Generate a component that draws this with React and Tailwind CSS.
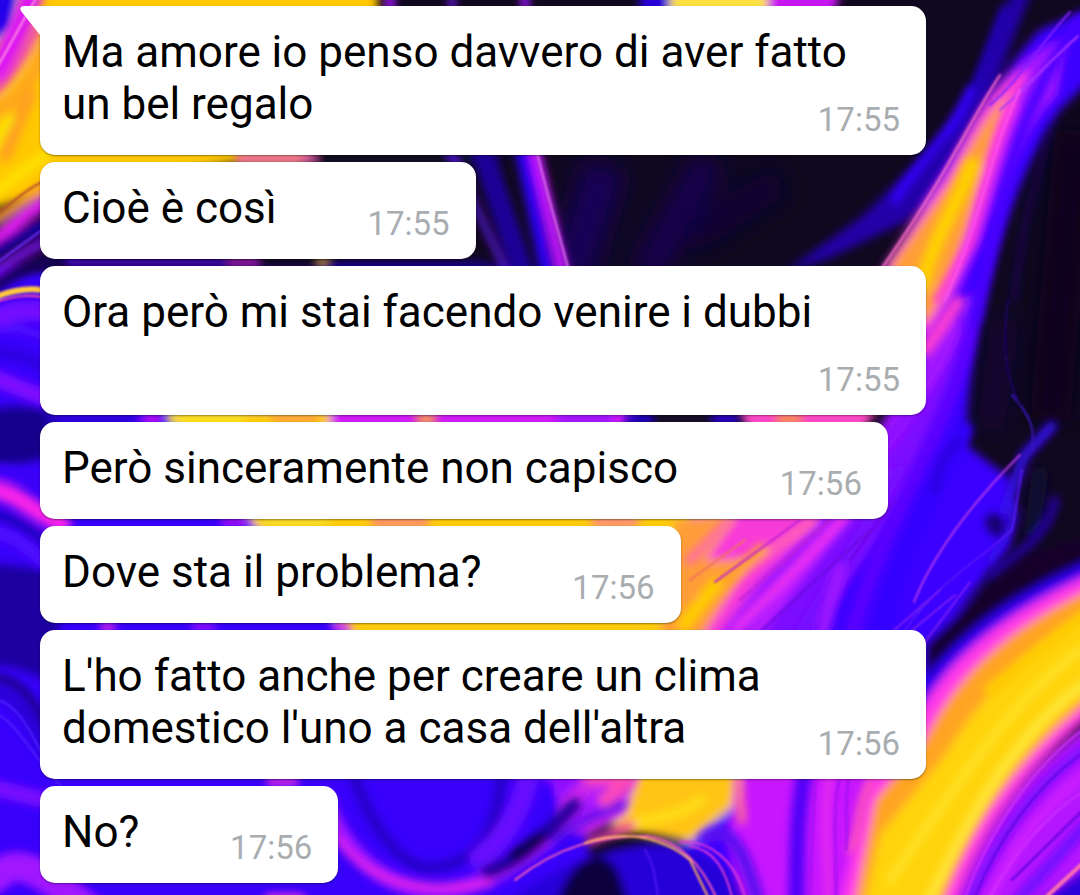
const messages = [
  { text: "Ma amore io penso davvero di aver fatto un bel regalo", time: "17:55" },
  { text: "Cioè è così", time: "17:55" },
  { text: "Ora però mi stai facendo venire i dubbi", time: "17:55" },
  { text: "Però sinceramente non capisco\u00a0", time: "17:56" },
  { text: "Dove sta il problema?", time: "17:56" },
  { text: "L'ho fatto anche per creare un clima domestico l'uno a casa dell'altra", time: "17:56" },
  { text: "No?", time: "17:56" },
];

// large soft areas of paint
const areas = [
  { d: "M-30 270H320L420 420L560 640L600 925H-30Z", fill: "#3800fa" },
  { d: "M-30 -30H378V60L300 162H240L60 190L-30 215Z", fill: "#ffc800" },
  { d: "M640 -30H672V30H640Z", fill: "#2c00d8" },
  { d: "M670 -30H770V30H670Z", fill: "#fbe040" },
  { d: "M770 -30H846L830 30H766Z", fill: "#c818f0" },
  { d: "M-30 -30H24L14 30L-30 62Z", fill: "#2400e8" },
  { d: "M-30 415C0 405 30 400 60 415V455C30 465 0 470 -30 465Z", fill: "#19008c" },
  { d: "M-30 560L60 570V690C30 670 0 660 -30 670Z", fill: "#1a00a0" },
  { d: "M320 262H480L560 280H320Z", fill: "#1c0098" },
  { d: "M1022 -30C985 50 975 110 925 155L860 218L780 275L830 258L905 222C950 180 975 140 1005 60L1040 -30Z", fill: "#2200a8" },
  // right ribbon and the purple field that it runs into
  { d: "M1110 0L1040 30C1000 70 940 180 880 275L926 400L640 640L700 925H900L930 650L975 590L1010 545L1012 480L966 445C968 340 1000 200 1060 110L1110 60Z", fill: "#3a00ff" },
  { d: "M926 320L978 290C962 380 925 460 870 550L800 650H660L690 520L880 430Z", fill: "#7c08ff" },
  { d: "M926 330L960 310C930 400 880 470 790 580L740 650H660L690 520L880 430Z", fill: "#a012ff" },
  { d: "M165 408H420L560 425L590 510L730 510L700 560L680 640H355L250 520Z", fill: "#ffcc10" },
  { d: "M330 405H640L600 460H330Z", fill: "#d01cf8" },
  { d: "M655 405H712V430H655Z", fill: "#140a28" },
  { d: "M735 405H880L850 450H760Z", fill: "#ff48c8" },
  { d: "M690 515H825L760 580L715 640H660Z", fill: "#f83ad8" },
  { d: "M675 520L735 515L705 560L750 560L700 640H660Z", fill: "#ff9d38" },
  { d: "M640 765H738L735 805L690 842L640 832L610 832Z", fill: "#ffc414" },
  { d: "M560 765H640L625 815L590 835L560 825Z", fill: "#c828ec" },
  { d: "M740 765H880L850 925H750L728 835Z", fill: "#c814ff" },
  { d: "M480 925C540 870 620 835 680 845C730 860 750 890 750 925Z", fill: "#2600d8" },
  { d: "M550 925C565 870 580 856 600 856C625 862 618 890 640 925Z", fill: "#10003c" },
  // river at the bottom right
  { d: "M1110 530L1020 555L925 645V700L1110 600Z", fill: "#12002c" },
  { d: "M1110 552C1010 592 960 632 915 690L925 720L1110 610Z", fill: "#2c00f0" },
  { d: "M1110 565C1010 608 950 652 915 720L870 775L835 925H950C975 840 1020 770 1110 700Z", fill: "#ff38e8" },
  { d: "M1110 580C1020 620 960 666 925 740L875 800L850 925H935C965 835 1010 760 1110 685Z", fill: "#ffa424" },
  { d: "M1110 600C1030 645 990 685 945 755L880 835L860 925H925C960 830 1010 750 1110 675Z", fill: "#ffd40a" },
  { d: "M1110 712C1030 760 980 830 950 925H1110Z", fill: "#b412ff" },
  { d: "M1110 850L1040 900V925H1110Z", fill: "#2a00d8" },
  // tongue at the top right
  { d: "M1065 40C1000 60 970 130 945 175L875 280L926 350C980 270 1000 150 1055 95Z", fill: "#a414ff" },
  { d: "M1030 70C996 76 975 125 950 170L884 268L926 335C970 270 985 160 1030 70Z", fill: "#ff40d8" },
  { d: "M1010 92C988 110 968 150 948 185L890 266L926 324C968 260 980 170 1010 92Z", fill: "#ff9e38" },
];

// very faint folds in the dark part
const folds = [
  { d: "M605 165L570 280", stroke: "#150658", width: 44 },
  { d: "M710 160L645 275", stroke: "#140550", width: 34 },
  { d: "M690 240L780 180", stroke: "#100434", width: 30 },
  { d: "M1075 130L1050 420", stroke: "#0e061c", width: 40 },
  { d: "M1005 320L990 430", stroke: "#120644", width: 14 },
];

const streaks = [
  // left edge
  { d: "M32 -5C24 20 10 48 -5 72", stroke: "#dc18f4", width: 22 },
  { d: "M38 28C22 62 8 80 -5 92", stroke: "#f040c0", width: 8 },
  { d: "M44 50C30 88 10 105 -5 112", stroke: "#ffa81c", width: 16 },
  { d: "M30 95L5 155", stroke: "#ffa020", width: 13 },
  { d: "M-5 145L10 118", stroke: "#f8e400", width: 9 },
  { d: "M45 155L-5 192", stroke: "#ffe000", width: 11 },
  { d: "M45 186L-5 220", stroke: "#ffa020", width: 9 },
  { d: "M45 202C20 217 10 228 -5 240", stroke: "#e41cf4", width: 13 },
  { d: "M50 222C26 232 8 244 -5 252", stroke: "#18009c", width: 14 },
  { d: "M60 237C35 244 12 260 -5 272", stroke: "#8410ff", width: 8 },
  { d: "M70 258C35 260 12 274 -5 286", stroke: "#14005c", width: 13 },
  { d: "M45 312C25 308 10 312 -5 318", stroke: "#7410ff", width: 20 },
  { d: "M45 338C25 328 12 328 -5 330", stroke: "#5208ff", width: 8 },
  { d: "M45 368C25 355 12 352 -5 354", stroke: "#2c00d8", width: 8 },
  { d: "M45 398L-5 378", stroke: "#8210ff", width: 16 },
  { d: "M-5 470L45 480", stroke: "#3a00f8", width: 14 },
  { d: "M-5 490C20 494 32 512 62 524", stroke: "#f820e8", width: 18 },
  { d: "M-5 515C15 518 28 528 45 542", stroke: "#1c00b8", width: 9 },
  { d: "M-5 532C15 536 28 548 45 562", stroke: "#5008ff", width: 14 },
  { d: "M-5 692C15 690 32 722 45 750", stroke: "#2c00d8", width: 14 },
  { d: "M-5 678C18 678 34 700 45 725", stroke: "#12006c", width: 7 },
  { d: "M-5 788L45 800", stroke: "#7a10ff", width: 16 },
  { d: "M-5 878C20 850 50 880 90 910", stroke: "#a012ff", width: 30 },
  { d: "M270 900H300", stroke: "#f030e8", width: 12 },
  // stripes showing between the bubbles
  { d: "M240 158H312", stroke: "#f868b8", width: 10 },
  { d: "M322 159H500", stroke: "#100820", width: 9 },
  { d: "M70 262H225", stroke: "#5a08ff", width: 6 },
  { d: "M230 262H258", stroke: "#e020f8", width: 6 },
  { d: "M318 262H328", stroke: "#f8c030", width: 6 },
  { d: "M50 419H132", stroke: "#2c00d0", width: 9 },
  { d: "M146 419H158", stroke: "#d818f0", width: 9 },
  { d: "M172 419H240", stroke: "#f8e420", width: 9 },
  { d: "M275 419H315", stroke: "#ff9c40", width: 9 },
  { d: "M420 419H432", stroke: "#ffb828", width: 9 },
  { d: "M560 419H610", stroke: "#9010ff", width: 9 },
  { d: "M628 419H650", stroke: "#2800f0", width: 9 },
  { d: "M715 419H735", stroke: "#3000f8", width: 9 },
  { d: "M780 419H798", stroke: "#ff9c38", width: 9 },
  { d: "M225 522H245", stroke: "#c018f0", width: 8 },
  { d: "M265 522H325", stroke: "#f4e030", width: 8 },
  { d: "M375 522H425", stroke: "#ff7890", width: 8 },
  { d: "M595 522H635", stroke: "#ff78a0", width: 8 },
  { d: "M104 627H112", stroke: "#f030e8", width: 8 },
  { d: "M195 627H212", stroke: "#a014ff", width: 8 },
  { d: "M335 627H346", stroke: "#e020f0", width: 8 },
  { d: "M270 782H295", stroke: "#f030e0", width: 8 },
  { d: "M390 -4V12", stroke: "#a018f8", width: 9 },
  { d: "M452 -4V12", stroke: "#7014f0", width: 6 },
  { d: "M525 -4V12", stroke: "#9818f8", width: 8 },
  // dark field in the middle
  { d: "M482 150L525 280", stroke: "#1a0098", width: 22 },
  { d: "M440 130L512 285", stroke: "#6014ff", width: 5 },
  { d: "M522 150L550 285", stroke: "#2c00f0", width: 14 },
  { d: "M532 140L566 285", stroke: "#c418ff", width: 12 },
  { d: "M1005 10C985 60 975 100 950 135", stroke: "#2400c0", width: 9 },
  { d: "M970 90C955 130 920 160 895 200", stroke: "#3600ff", width: 9 },
  // tongue
  { d: "M972 165C955 210 935 235 922 285", stroke: "#ffd000", width: 15 },
  { d: "M1012 105C992 150 985 190 972 240L938 300", stroke: "#ff30e0", width: 8 },
  { d: "M1080 20C1030 90 1010 160 995 230L975 320", stroke: "#4800ff", width: 12 },
  { d: "M1050 130C1030 200 1020 240 1014 300", stroke: "#160058", width: 5 },
  // purple field
  { d: "M926 350L958 302", stroke: "#ff40d0", width: 12 },
  { d: "M955 330C930 400 880 440 800 560", stroke: "#a414ff", width: 10 },
  { d: "M970 330C950 430 890 500 850 640", stroke: "#5c04ff", width: 14 },
  { d: "M965 430C940 480 900 540 880 640", stroke: "#3000ff", width: 16 },
  { d: "M920 400L845 490", stroke: "#8c10ff", width: 14 },
  { d: "M880 470L750 640", stroke: "#bc1cff", width: 12 },
  { d: "M900 470L795 640", stroke: "#7408ff", width: 10 },
  { d: "M840 570L820 640", stroke: "#9c14ff", width: 14 },
  { d: "M812 522L700 600", stroke: "#ff60b8", width: 10 },
  { d: "M845 518L735 630", stroke: "#f030f0", width: 9 },
  { d: "M730 520L690 560", stroke: "#ff70a0", width: 10 },
  { d: "M762 550L680 622", stroke: "#ffa428", width: 12 },
  { d: "M684 625L715 585", stroke: "#ffcc00", width: 14 },
  // dark wing on the right
  { d: "M994 522L998 528", stroke: "#180070", width: 18 },
  { d: "M1040 475L1032 530", stroke: "#100830", width: 16 },
  { d: "M960 440C945 455 940 460 935 490", stroke: "#2a00d8", width: 8 },
  { d: "M1052 426L1024 456L1004 510", stroke: "#3408f0", width: 10 },
  { d: "M1010 500C1020 520 1005 540 990 560", stroke: "#3408e8", width: 8 },
  { d: "M1055 500C1050 530 1030 545 990 575", stroke: "#2404a0", width: 9 },
  // river
  { d: "M1090 645C1030 680 980 750 890 880", stroke: "#ffe42c", width: 7 },
  { d: "M1090 680C1030 720 980 790 925 910", stroke: "#ffe83c", width: 9 },
  { d: "M1090 612L990 690", stroke: "#ffcc00", width: 12 },
  { d: "M1090 745C1040 780 1000 830 965 910", stroke: "#7c08ff", width: 10 },
  { d: "M1090 770C1040 810 1010 850 985 910", stroke: "#d420ff", width: 8 },
  { d: "M1090 820L1010 910", stroke: "#7008ff", width: 12 },
  // waves at the bottom
  { d: "M350 765C375 840 405 868 432 868C480 862 500 830 502 765", stroke: "#2000c0", width: 9 },
  { d: "M530 765C525 800 510 835 480 858", stroke: "#6808ff", width: 22 },
  { d: "M325 800C350 870 400 890 440 892C510 885 550 830 620 785", stroke: "#a414ff", width: 17 },
  { d: "M338 840C370 885 420 892 490 884", stroke: "#e424e8", width: 7 },
  { d: "M488 872C520 862 540 840 575 805", stroke: "#1a0098", width: 14 },
  { d: "M515 855L540 838", stroke: "#10004c", width: 12 },
  { d: "M550 776H575L560 790", stroke: "#9010ff", width: 14 },
  { d: "M590 778H630L605 800", stroke: "#fc48b8", width: 14 },
  { d: "M555 840C580 820 600 814 622 804", stroke: "#5808e8", width: 8 },
  { d: "M590 842L640 822", stroke: "#f840c8", width: 7 },
  { d: "M640 822C660 816 685 815 700 800", stroke: "#ffdc14", width: 12 },
  { d: "M706 838C730 822 745 850 760 910", stroke: "#5c08f0", width: 14 },
  { d: "M806 765C795 820 798 860 796 910", stroke: "#5004f8", width: 16 },
  { d: "M832 765C820 820 830 860 828 910", stroke: "#f030e8", width: 6 },
  { d: "M738 770L742 820", stroke: "#ff7090", width: 8 },
  { d: "M870 782C855 810 862 830 850 850", stroke: "#ff58b0", width: 7 },
];

const threads = [
  { d: "M36 -2L-2 66", stroke: "#ff90e0" },
  { d: "M42 182C25 190 10 204 -2 214", stroke: "#b85030" },
  { d: "M42 290C28 288 14 290 -2 296", stroke: "#ffc840", width: 6 },
  { d: "M42 297C26 294 14 297 -2 301", stroke: "#ff50a0" },
  { d: "M537 152C546 190 558 230 568 268", stroke: "#e070f0" },
  { d: "M1000 75C970 120 950 170 882 268", stroke: "#ff70c8" },
  { d: "M1078 36C1040 70 1025 90 1000 110", stroke: "#b038ff" },
  { d: "M1070 12C1035 50 1020 80 990 105", stroke: "#8020ff" },
  { d: "M1020 90C990 150 985 210 945 300", stroke: "#ff50f0" },
  { d: "M914 602C935 550 975 500 1020 455", stroke: "#b038e8" },
  { d: "M905 630C940 580 980 560 1012 530L1022 470", stroke: "#5818f8" },
  { d: "M1012 395C1030 415 1036 430 1032 450", stroke: "#3818b8" },
  { d: "M1008 300C1002 350 1005 375 1020 405", stroke: "#1c0860" },
  { d: "M955 595L900 640M940 590L892 632M970 582L915 655", stroke: "#7a20f0" },
  { d: "M830 520L740 600M800 520L715 582", stroke: "#c020d8" },
  { d: "M870 530L760 632M895 500L850 560", stroke: "#6a08e0" },
  { d: "M745 540L690 580", stroke: "#f07060" },
  { d: "M840 775C832 810 836 840 836 897M850 775C842 805 850 820 846 850M815 775L810 897", stroke: "#a010f0" },
  { d: "M1085 728C1035 765 995 820 965 897M1085 790C1040 820 1010 860 990 897", stroke: "#d030ff" },
  { d: "M1085 752C1040 782 1000 835 975 897M1085 808L1012 880", stroke: "#6000e0" },
  { d: "M1046 897L1082 864", stroke: "#ff70b0", width: 4 },
  { d: "M515 880C560 845 600 836 648 836C680 842 700 862 716 897", stroke: "#f860b8", width: 2 },
  { d: "M585 843C620 830 660 835 690 860L708 897", stroke: "#ffb060" },
  { d: "M680 842C710 840 735 860 745 897M690 846C715 850 725 870 732 897", stroke: "#e038d8" },
  { d: "M645 850C655 865 655 880 658 897", stroke: "#5018f0" },
  { d: "M-2 700C20 705 35 740 50 770M-2 715C14 720 30 752 60 785", stroke: "#5020ff" },
  { d: "M-2 262L42 230", stroke: "#7030ff" },
];

function Wallpaper() {
  return (
    <svg
      className="absolute inset-0 h-full w-full"
      viewBox="0 0 1080 895"
      preserveAspectRatio="xMidYMid slice"
      aria-hidden="true"
    >
      <defs>
        <filter id="fold" filterUnits="userSpaceOnUse" x="-40" y="-40" width="1160" height="975">
          <feGaussianBlur stdDeviation="12" />
        </filter>
        <filter id="soft" filterUnits="userSpaceOnUse" x="-40" y="-40" width="1160" height="975">
          <feGaussianBlur stdDeviation="5" />
        </filter>
        <filter id="streak" filterUnits="userSpaceOnUse" x="-40" y="-40" width="1160" height="975">
          <feGaussianBlur stdDeviation="4" />
        </filter>
        <filter id="thread" filterUnits="userSpaceOnUse" x="-40" y="-40" width="1160" height="975">
          <feGaussianBlur stdDeviation="1" />
        </filter>
      </defs>
      <rect x="-40" y="-40" width="1160" height="975" fill="#10081e" />
      <g filter="url(#fold)" fill="none">
        {folds.map((f, i) => (
          <path key={i} d={f.d} stroke={f.stroke} strokeWidth={f.width} />
        ))}
      </g>
      <g filter="url(#soft)">
        {areas.map((a, i) => (
          <path key={i} d={a.d} fill={a.fill} />
        ))}
      </g>
      <g filter="url(#streak)" fill="none" strokeLinecap="round" strokeLinejoin="round">
        {streaks.map((s, i) => (
          <path key={i} d={s.d} stroke={s.stroke} strokeWidth={s.width} />
        ))}
      </g>
      <g filter="url(#thread)" fill="none" strokeLinecap="round">
        {threads.map((t, i) => (
          <path key={i} d={t.d} stroke={t.stroke} strokeWidth={t.width || 2} />
        ))}
      </g>
    </svg>
  );
}

function Bubble({ message, first }) {
  return (
    <li
      className={
        first
          ? "relative grid rounded-[15px] rounded-tl-none bg-white pr-[26px] pl-[22px] shadow-[0_1px_2px_rgba(0,0,0,0.4)]"
          : "relative grid rounded-[15px] bg-white pr-[26px] pl-[22px] shadow-[0_1px_2px_rgba(0,0,0,0.4)]"
      }
    >
      {first && (
        <svg className="absolute top-0 -left-5 h-[30px] w-[21px]" viewBox="0 0 21 30" aria-hidden="true">
          <path d="M21 0H3Q-1 1 1 5L20 29H21Z" fill="#fff" />
        </svg>
      )}
      {/* the empty inline block keeps room for the time on the last line */}
      <p className="col-start-1 row-start-1 pt-5 pb-[25px] text-[44px] leading-[52px] text-black">
        {message.text}
        <span className="inline-block w-[173px]" />
      </p>
      <time className="col-start-1 row-start-1 self-end justify-self-end pb-[15px] text-[33px] leading-10 text-[#a9adaf]">
        {message.time}
      </time>
    </li>
  );
}

export default function App() {
  return (
    <main className="relative min-h-screen overflow-hidden bg-[#10081e] font-[Roboto,sans-serif]">
      <Wallpaper />
      <ul className="relative flex flex-col items-start gap-[7px] pt-[6px] pr-[154px] pb-3 pl-10">
        {messages.map((message, i) => (
          <Bubble key={i} message={message} first={i === 0} />
        ))}
      </ul>
    </main>
  );
}
